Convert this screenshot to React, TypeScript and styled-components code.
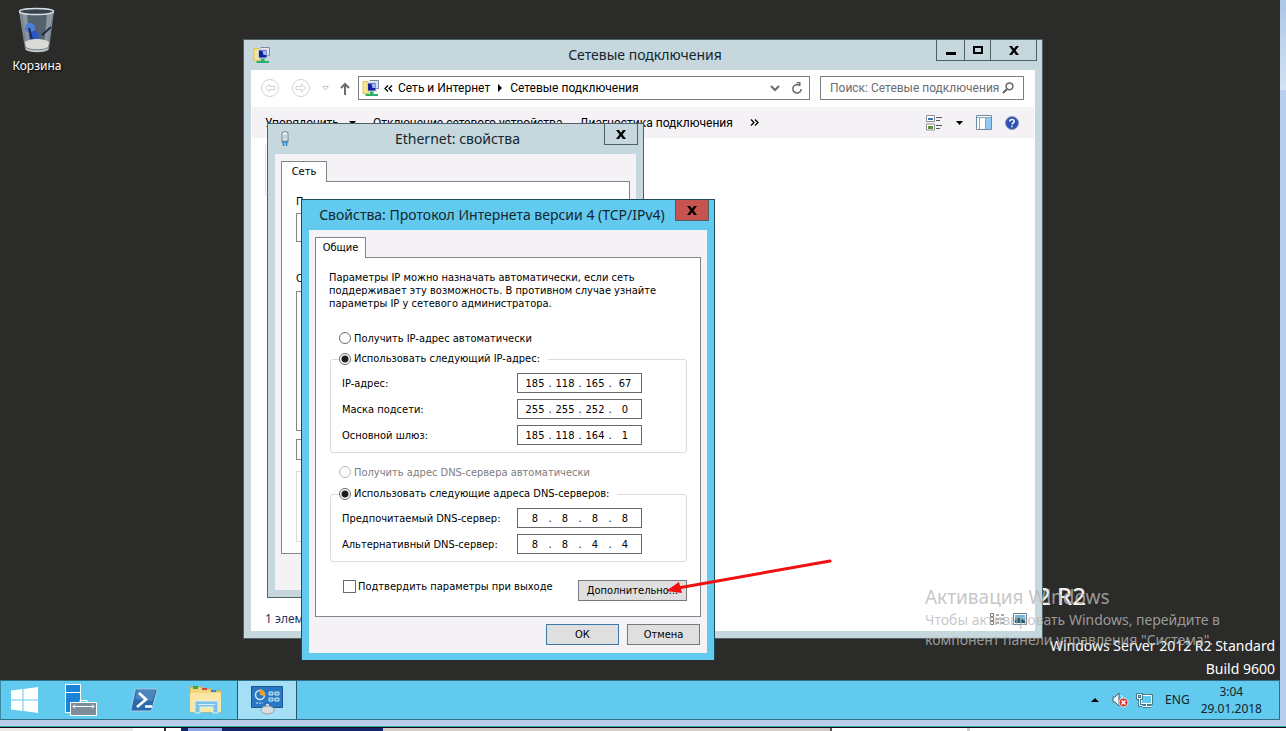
import React from "react";
import styled, { createGlobalStyle, css } from "styled-components";

const ui = '"Noto Sans", "Open Sans", sans-serif';
const narrow = 'Roboto, "Noto Sans", sans-serif';
const dlg = '"DejaVu Sans Condensed", "DejaVu Sans", sans-serif';

const Global = createGlobalStyle`
  *, *::before, *::after { box-sizing: border-box; }
  body { margin: 0; background: #fff; font: 12px/16px ${ui}; color: #000; }
  button, input { font: inherit; color: inherit; margin: 0; padding: 0; border-radius: 0; }
  svg { display: block; flex: none; }
  p { margin: 0; }
`;

const Screen = styled.div`
  height: 100vh;
  display: flex;
  flex-direction: column;
  overflow: hidden;
`;
const Remote = styled.div`
  flex: 1;
  min-height: 0;
  display: flex;
  flex-direction: column;
  background: linear-gradient(#adc6e6, #d3e2f3 90px, #b9cdec 90px);
  border-bottom: 1px solid #3fa9a9;
  padding: 0 6px 6px 0;
`;
const Desktop = styled.main`
  flex: 1;
  position: relative;
  background: #2b2b29;
  overflow: hidden;
`;
const Shortcut = styled.button`
  position: absolute;
  left: 0;
  top: 6px;
  width: 74px;
  display: flex;
  flex-direction: column;
  align-items: center;
  gap: 4px;
  border: 0;
  background: none;
  color: #fff;
  text-shadow: 1px 1px 2px #000;
`;

/* windows */
const frames = {
  idle: { frame: "#c6d7de", edge: "#4f6066" },
  active: { frame: "#62caee", edge: "#1d4a5a" },
};
const Window = styled.section<{ $tone: "idle" | "active"; $x: number; $y: number; $w: number; $h: number }>`
  position: absolute;
  left: ${(p) => p.$x}px;
  top: ${(p) => p.$y}px;
  width: ${(p) => p.$w}px;
  height: ${(p) => p.$h}px;
  display: flex;
  flex-direction: column;
  padding: 0 7px 7px;
  background: ${(p) => frames[p.$tone].frame};
  border: 1px solid ${(p) => frames[p.$tone].edge};
  ${(p) => p.$tone === "active" && css`border-bottom: 0;`}
`;
const TitleBar = styled.header<{ $fill?: boolean }>`
  height: 30px;
  flex: none;
  display: grid;
  grid-template-columns: ${(p) => (p.$fill ? "1fr auto" : "1fr auto 1fr")};
  align-items: center;
  margin-right: -2px;
  padding-left: ${(p) => (p.$fill ? 0 : 2)}px;
`;
const Title = styled.h1`
  margin: 0;
  font-size: 14px;
  line-height: 20px;
  font-weight: 400;
  color: #14262e;
  text-align: center;
  white-space: nowrap;
`;
const Caption = styled.div`
  display: flex;
  justify-content: flex-end;
  align-self: start;
`;
const CaptionButton = styled.button<{ $w: number; $danger?: boolean }>`
  width: ${(p) => p.$w}px;
  height: 21px;
  display: flex;
  align-items: center;
  justify-content: center;
  border: 1px solid #4f6066;
  border-top: 0;
  background: ${(p) => (p.$danger ? "#c75450" : "transparent")};
  & + & { border-left: 0; }
`;
const Client = styled.div<{ $grey?: boolean }>`
  flex: 1;
  min-height: 0;
  display: flex;
  flex-direction: column;
  background: ${(p) => (p.$grey ? "#f5f2f6" : "#fff")};
  border: 1px solid ${(p) => (p.$grey ? "#f5f2f6" : "#fff")};
`;

/* explorer */
const NavRow = styled.nav`
  height: 36px;
  flex: none;
  display: flex;
  align-items: center;
  gap: 10px;
  padding: 0 10px 2px 8px;
  font-family: ${narrow};
`;
const Plain = styled.button`
  display: flex;
  align-items: center;
  border: 0;
  background: none;
  white-space: nowrap;
`;
const History = styled.div`
  display: flex;
  align-items: center;
  gap: 11px;
  flex: none;
  margin-right: -2px;
`;
const Address = styled.div`
  flex: 1;
  height: 24px;
  display: flex;
  align-items: center;
  gap: 5px;
  border: 1px solid #7d7d80;
  padding: 0 6px 0 3px;
`;
const AddressTools = styled.div`
  display: flex;
  align-items: center;
  gap: 11px;
`;
const Spacer = styled.span`
  flex: 1;
`;
const Search = styled.label`
  width: 204px;
  height: 24px;
  display: flex;
  align-items: center;
  border: 1px solid #7d7d80;
  padding: 0 9px;
`;
const SearchInput = styled.input`
  flex: 1;
  min-width: 0;
  border: 0;
  outline: 0;
  background: none;
  &::placeholder { color: #6d6d6d; opacity: 1; }
`;
const Toolbar = styled.div`
  height: 31px;
  flex: none;
  display: flex;
  align-items: center;
  gap: 17px;
  background: #f5f2f6;
  padding: 0 15px 0 13px;
  font-family: ${narrow};
`;
const ToolGroup = styled.div<{ $tight?: boolean }>`
  display: flex;
  align-items: center;
  gap: ${(p) => (p.$tight ? 10 : 13)}px;
`;
const Files = styled.div`
  flex: 1;
  padding: 6px 13px;
`;
const FileTile = styled.div`
  width: 240px;
  height: 52px;
  border: 1px solid #dde3ea;
`;
const StatusBar = styled.footer`
  height: 22px;
  flex: none;
  display: flex;
  align-items: center;
  justify-content: space-between;
  padding: 0 7px 0 13px;
  color: #26335c;
`;
const ViewSwitch = styled.div`
  display: flex;
  gap: 8px;
`;

/* dialogs */
const DialogClient = styled(Client)`
  padding: 6px 5px 7px;
  font: 11px/13px ${dlg};
`;
const Tab = styled.button<{ $w: number }>`
  width: ${(p) => p.$w}px;
  height: 21px;
  flex: none;
  position: relative;
  z-index: 1;
  margin-bottom: -1px;
  padding-bottom: 2px;
  border: 1px solid #84848a;
  border-bottom: 0;
  background: #fff;
`;
const Pane = styled.div`
  flex: 1;
  border: 1px solid #84848a;
  background: #fff;
  padding: 13px 13px 0;
`;
const Stub = styled.div<{ $h: number; $gap: number; $soft?: boolean }>`
  height: ${(p) => p.$h}px;
  margin-top: ${(p) => p.$gap}px;
  border: 1px solid ${(p) => (p.$soft ? "#dcdce0" : "#84848a")};
`;
const EthernetPane = styled(Pane)`
  flex: none;
  height: 373px;
  padding-left: 14px;
`;
const StubLabel = styled.p<{ $gap?: boolean }>`
  margin-top: ${(p) => (p.$gap ? 30 : 0)}px;
`;
const Choice = styled.label<{ $off?: boolean }>`
  display: flex;
  align-items: center;
  gap: 3px;
  color: ${(p) => (p.$off ? "#7c7c80" : "#000")};
`;
const AutoRow = styled.div<{ $gap: number }>`
  margin-top: ${(p) => p.$gap}px;
  padding-left: 10px;
  height: 14px;
  display: flex;
  align-items: center;
`;
const Radio = styled.input`
  appearance: none;
  width: 12px;
  height: 12px;
  border: 1px solid #6b6b6e;
  border-radius: 50%;
  background: #fff;
  &:checked { background: radial-gradient(circle, #1c1c1c 3px, #fff 4px); }
  &:disabled { border-color: #b8b8bc; }
`;
const Group = styled.fieldset<{ $h: number; $gap: number }>`
  height: ${(p) => p.$h}px;
  margin: ${(p) => p.$gap}px 0 0 1px;
  padding: 7px 44px 0 11px;
  border: 1px solid #dcdce0;
  border-radius: 3px;
  display: flex;
  flex-direction: column;
  gap: 6px;
  min-width: 0;
`;
const Legend = styled.legend`
  height: 14px;
  padding: 0 8px 0 0;
  margin-left: -3px;
`;
const FieldRow = styled.div`
  display: flex;
  align-items: center;
  justify-content: space-between;
`;
const IpBox = styled.div`
  width: 125px;
  height: 20px;
  display: flex;
  align-items: center;
  border: 1px solid #68686c;
  padding-left: 4px;
  background: #fff;
`;
const Octet = styled.input`
  width: 26px;
  height: 16px;
  border: 0;
  outline: 0;
  background: none;
  text-align: center;
`;
const Dot = styled.span`
  width: 4px;
  text-align: center;
`;
const Foot = styled.div`
  display: flex;
  justify-content: space-between;
  margin-top: 18px;
  padding-left: 14px;
`;
const Check = styled.input`
  appearance: none;
  width: 13px;
  height: 13px;
  border: 1px solid #6b6b6e;
  background: #fff;
`;
const CheckLabel = styled.label`
  height: 13px;
  display: flex;
  align-items: center;
  gap: 2px;
`;
const PushButton = styled.button<{ $w: number; $default?: boolean }>`
  width: ${(p) => p.$w}px;
  height: 21px;
  border: 1px solid ${(p) => (p.$default ? "#3d77a8" : "#78787c")};
  background: #dfdfdf;
`;
const Actions = styled.div`
  display: flex;
  justify-content: flex-end;
  gap: 8px;
  padding: 7px 1px 0 0;
`;

/* desktop overlays */
const Edition = styled.div`
  position: absolute;
  right: 194px;
  bottom: 66px;
  font-size: 24px;
  line-height: 36px;
  font-weight: 500;
  color: #f2f2f2;
`;
const Build = styled.div`
  position: absolute;
  right: 5px;
  bottom: 0;
  font-size: 14px;
  line-height: 23px;
  color: #fff;
  text-align: right;
`;
const Activation = styled.div`
  position: absolute;
  right: 35px;
  bottom: 30px;
  width: 320px;
  font-size: 14px;
  line-height: 20px;
  color: rgba(184, 184, 184, 0.8);
  pointer-events: none;
`;
const ActivationTitle = styled.p`
  font-size: 19px;
  line-height: 26px;
`;
const Pointer = styled.svg`
  position: absolute;
  left: 664px;
  top: 556px;
`;

/* taskbar */
const Taskbar = styled.footer`
  height: 40px;
  flex: none;
  display: flex;
  background: #62caee;
  border: 1px solid #2c6f8a;
  border-left-color: #3c88a5;
`;
const Task = styled.button<{ $w: number; $on?: boolean }>`
  width: ${(p) => p.$w}px;
  display: flex;
  align-items: center;
  justify-content: center;
  border: 0;
  background: none;
  ${(p) => p.$on && css`background: #a4dff5; border: solid #27566a; border-width: 0 1px;`}
`;
const Tray = styled.div`
  margin-left: auto;
  display: flex;
  align-items: center;
  padding-right: 17px;
  color: #10242c;
`;
const TrayButton = styled(Plain)<{ $gap: number }>`
  margin-right: ${(p) => p.$gap}px;
`;
const Clock = styled.time`
  text-align: center;
  line-height: 17px;
`;

/* strip of the host screen under the remote session */
const Host = styled.div`
  height: 4px;
  flex: none;
  display: flex;
  background: #fff;
  border-top: 1px solid #0a0f14;
`;
const HostPart = styled.span<{ $w: number; $c: string }>`
  width: ${(p) => p.$w}px;
  flex: none;
  background: ${(p) => p.$c};
`;

const NetIcon = () => (
  <svg width="17" height="17" viewBox="0 0 17 17">
    <path d="M1 1.500h5l1 1v11H1z" fill="#f6e58c" stroke="#dcc45c" />
    <path d="M7.500.500h9v8h-3" fill="#e3e7f2" stroke="#7d88a8" />
    <rect x="5.500" y="3" width="8.500" height="8" fill="#12209c" stroke="#c4cbe4" />
    <path d="M9.500 4h4v4h-3z" fill="#9db8f6" />
    <path d="M8 11.500h3.500V14H16v2H3.500v-2H8z" fill="#27b06a" />
  </svg>
);
const PlugIcon = () => (
  <svg width="16" height="16" viewBox="0 0 16 16">
    <path d="M5 1.500q3-2 6 0v8.500H5z" fill="#eef3f6" stroke="#71858f" />
    <path d="M7 3.500v5M9 3.500v5" stroke="#9fb2bc" />
    <path d="M4.500 11h7M6.500 11v4M9.500 11v4" stroke="#2f86c8" strokeWidth="1.600" />
  </svg>
);
const Cross = () => (
  <svg width="10" height="9" viewBox="0 0 10 9">
    <path d="M0 0h3l2 2.700L7 0h3L6.600 4.500 10 9H7L5 6.300 3 9H0l3.400-4.500z" fill="#000" />
  </svg>
);
const Minus = () => <svg width="10" height="9"><path d="M0 6h10v3H0z" /></svg>;
const Square = () => <svg width="10" height="8"><path d="M1 1h8v6H1z" fill="none" stroke="#000" strokeWidth="2" /></svg>;
const Round = ({ back }: { back?: boolean }) => (
  <svg width="20" height="20" viewBox="0 0 20 20" fill="none" stroke="#d2d2d4">
    <circle cx="10" cy="10" r="8.500" />
    <path d={back ? "M15 8.500H9.500V6L5.500 10l4 4v-2.500H15z" : "M5 8.500h5.500V6l4 4-4 4v-2.500H5z"} />
  </svg>
);
const Caret = () => <svg width="7" height="4"><path d="M0 0h7L3.500 4z" /></svg>;
const HistoryCaret = () => <svg width="7" height="5"><path d="M.500.500h6l-3 3.500z" fill="none" stroke="#c8c8cc" /></svg>;
const UpArrow = () => <svg width="10" height="13"><path d="M5 13V2M1 6l4-4 4 4" fill="none" stroke="#6c6c70" strokeWidth="2" /></svg>;
const Chevrons = ({ left }: { left?: boolean }) => (
  <svg width="9" height="7" viewBox="0 0 9 7" fill="none" stroke="#000" strokeWidth="1.300">
    <path d={left ? "M4 .5 1 3.500l3 3M8 .5 5 3.500l3 3" : "M1 .5l3 3-3 3M5 .5l3 3-3 3"} />
  </svg>
);
const DetailsIcon = () => (
  <svg width="17" height="16" viewBox="0 0 17 16">
    <path d="M.5.5h8v6h-8zM.5 9h8v6h-8z" fill="#fff" stroke="#8d8d96" />
    <path d="M2 3h5v2H2z" fill="#3876b8" /><path d="M2 11h5v3H2z" fill="#5f8f3f" />
    <path d="M10 2.500h6M10 5.500h4M10 10.500h6M10 13.500h4" stroke="#56565e" />
  </svg>
);
const PaneIcon = () => (
  <svg width="16" height="15" viewBox="0 0 16 15">
    <path d="M.5.500h15v14H.5z" fill="#fff" stroke="#6f8ba4" />
    <path d="M1 2.500h14M3.500 3v11M9.500 3v11" stroke="#8aa6bc" /><path d="M10 3h5v11h-5z" fill="#8fcaf4" />
  </svg>
);
const HelpIcon = () => (
  <svg width="14" height="14" viewBox="0 0 14 14">
    <circle cx="7" cy="7" r="6.500" fill="#2d50b4" stroke="#8e9ab8" />
    <path d="M4.800 5.500C4.800 2.700 9.300 2.800 9.200 5.400 9.100 6.800 7 6.900 7 8.600M7 9.800v1.500" fill="none" stroke="#fff" strokeWidth="1.500" />
  </svg>
);
const Refresh = () => (
  <svg width="12" height="13" viewBox="0 0 12 13" fill="none" stroke="#707074" strokeWidth="1.600">
    <path d="M8 3.200A4.200 4.200 0 1 0 10.200 7" /><path d="M5.500.5h3.200v3.600" />
  </svg>
);
const Lens = () => (
  <svg width="12" height="12" viewBox="0 0 12 12" fill="none" stroke="#66666a">
    <circle cx="7.500" cy="4.300" r="3.400" strokeWidth="1.500" /><path d="M5 7 1 11" strokeWidth="2.200" />
  </svg>
);
const Bin = () => (
  <svg width="38" height="48" viewBox="0 0 38 48">
    <path d="M1 5h35l-5 38c-3 4-20 4-24 0z" fill="#7c8892" />
    <path d="M4 7h29l-4 33H9z" fill="#54616e" />
    <path d="M4 7h5l3 33H9zM29 7h5l-5 33h-3z" fill="#a4adb4" opacity=".7" />
    <circle cx="12" cy="22" r="5" fill="#4f7ed8" /><circle cx="16" cy="30" r="5" fill="#2a57c4" />
    <path d="M11 22l3 11M33 21l-9 8" stroke="#1d2c48" strokeWidth="2" />
    <path d="M7 36c4-4 20-4 24 0l-1 5c-4 3-18 3-22 0z" fill="#dbdbd6" />
    <path d="M8 43c4 3 18 3 22 0" fill="none" stroke="#c2c8cc" strokeWidth="2" />
    <ellipse cx="18.500" cy="5.500" rx="17" ry="3" fill="#39434d" stroke="#d7dde1" strokeWidth="1.500" />
  </svg>
);
const WinLogo = () => (
  <svg width="28" height="26" viewBox="0 0 28 26" fill="#fff">
    <path d="M0 3.500 11.500 2v10.500H0zM12.500 1.900 27 0v12.500H12.500zM0 13.500h11.500V24L0 22.500zM12.500 13.500H27V26l-14.500-1.900z" />
  </svg>
);
const ServerIcon = () => (
  <svg width="32" height="32" viewBox="0 0 32 32">
    <path d="M.5.500h15v28H.5z" fill="#1c84d8" stroke="#fff" /><path d="M1 8.500h14" stroke="#fff" />
    <path d="M15 19v-2.500h7V19" fill="none" stroke="#fff" />
    <path d="M5.500 18.500h26v13h-26z" fill="#7d8e9a" stroke="#fff" />
    <path d="M8 22.500h21M10 20.500l-2 2 2 2M27 20.500l2 2-2 2" fill="none" stroke="#fff" />
  </svg>
);
const ShellIcon = () => (
  <svg width="28" height="24" viewBox="0 0 28 24">
    <path d="M6 1h20q1.500 0 1 2l-5 18q-.5 2-2 2H2q-2 0-1-2L5 3q.2-2 1-2z" fill="#2a69ab" stroke="#a9cfe8" />
    <path d="M7 2h19l-4 11L5 11z" fill="#5b93c8" opacity=".7" />
    <path d="M9 5l7 6.500L7 19M15 18.500h7" fill="none" stroke="#fff" strokeWidth="2.600" />
  </svg>
);
const FolderIcon = () => (
  <svg width="34" height="30" viewBox="0 0 34 30">
    <path d="M1 2h12l1 2h8l1 2h9v21H1z" fill="#f1d67e" stroke="#d2ad4a" />
    <path d="M4 1h5v3H4z" fill="#37a64a" /><path d="M13 3h5v2h-5z" fill="#cf4a36" /><path d="M22 5h5v2h-5z" fill="#3a86c8" />
    <path d="M1 8h31v19H1z" fill="#f9e7a3" />
    <path d="M6 28V17q0-1 1-1h21q1 0 1 1v11h-5v-6H11v6z" fill="#7cc2e6" stroke="#d8f0fb" />
    <path d="M9 19.500h17" stroke="#d8f0fb" />
  </svg>
);
const PanelIcon = () => (
  <svg width="32" height="30" viewBox="0 0 32 30">
    <path d="M.5 1.500h31v21H.5z" fill="#2a78c4" stroke="#1b5692" />
    <circle cx="9" cy="10" r="4.500" fill="none" stroke="#cfe6f6" strokeWidth="1.500" /><path d="M9 10V4a6 6 0 0 1 5 7z" fill="#f2a13a" />
    <path d="M18 7h4v3h-4zM24 7h4v3h-4zM18 13h4v3h-4zM24 13h4v3h-4z" fill="#4f9ad8" stroke="#cfe6f6" />
    <path d="M5 18h7" stroke="#cfe6f6" strokeDasharray="2 1" />
    <path d="M15 19h3v4h-3z" fill="#d3d8dc" /><ellipse cx="16.500" cy="25" rx="6.500" ry="4" fill="#d9dde0" stroke="#98a2aa" />
  </svg>
);
const SoundIcon = () => (
  <svg width="17" height="16" viewBox="0 0 17 16">
    <path d="M1 5h2l4-4v13l-4-4H1z" fill="#eef6fa" stroke="#45616e" /><path d="M9 3q3 3 0 9" fill="none" stroke="#fff" />
    <circle cx="11.500" cy="10.500" r="4.500" fill="#d8342c" stroke="#f2dede" />
    <path d="M9.500 8.500l4 4M13.500 8.500l-4 4" stroke="#fff" strokeWidth="1.500" />
  </svg>
);
const LanIcon = () => (
  <svg width="17" height="15" viewBox="0 0 17 15">
    <g fill="none" stroke="#3d6474" strokeWidth="2.600">
      <path d="M5.500 2.500h10v8h-10zM10.500 11v3M7 13.500h8" />
    </g>
    <path d="M5.500 2.500h10v8h-10z" fill="#62caee" stroke="#fff" /><path d="M10.500 11v3M7 13.500h8" stroke="#fff" />
    <path d="M1.500 1.500h4v4h-4zM3.500 6v6.500H6" fill="#62caee" stroke="#3d6474" strokeWidth="2.600" />
    <path d="M1.500 1.500h4v4h-4zM3.500 6v6.500H6" fill="none" stroke="#fff" />
  </svg>
);
const PictureIcon = () => (
  <svg width="14" height="12" viewBox="0 0 14 12">
    <path d="M.5.500h13v11H.5z" fill="#fff" stroke="#6d7c88" /><path d="M2 2h10v8H2z" fill="#6fb4da" /><path d="M2 5q5-1 10 3v2H2z" fill="#24566e" />
  </svg>
);
const ListIcon = () => (
  <svg width="15" height="12" viewBox="0 0 15 12">
    <path d="M.5.500h3v3h-3zM.5 4.500h3v3h-3zM.5 8.500h3v3h-3z" fill="none" stroke="#7a7a84" />
    <path d="M6 2h3M11 2h3M6 6h3M11 6h3M6 10h3M11 10h3" stroke="#56565e" />
  </svg>
);

function IpField({ label, value }: { label: string; value: string[] }) {
  return (
    <FieldRow>
      <span>{label}</span>
      <IpBox role="group" aria-label={label}>
        {value.map((v, i) => (
          <React.Fragment key={i}>
            {i > 0 && <Dot>.</Dot>}
            <Octet defaultValue={v} aria-label={`${label} ${i + 1}`} />
          </React.Fragment>
        ))}
      </IpBox>
    </FieldRow>
  );
}

const Connections = () => (
  <Window $tone="idle" $x={243} $y={39} $w={800} $h={600}>
    <TitleBar>
      <NetIcon />
      <Title>Сетевые подключения</Title>
      <Caption>
        <CaptionButton $w={29} aria-label="Свернуть"><Minus /></CaptionButton>
        <CaptionButton $w={26} aria-label="Развернуть"><Square /></CaptionButton>
        <CaptionButton $w={46} aria-label="Закрыть"><Cross /></CaptionButton>
      </Caption>
    </TitleBar>
    <Client>
      <NavRow>
        <History>
          <Plain aria-label="Назад"><Round back /></Plain>
          <Plain aria-label="Вперёд"><Round /></Plain>
          <Plain aria-label="Журнал"><HistoryCaret /></Plain>
          <Plain aria-label="Вверх"><UpArrow /></Plain>
        </History>
        <Address>
          <NetIcon />
          <Chevrons left />
          <Plain>Сеть и Интернет</Plain>
          <svg width="10" height="8"><path d="M3 0l4 4-4 4z" /></svg>
          <Plain>Сетевые подключения</Plain>
          <Spacer />
          <AddressTools>
            <Plain aria-label="Список"><svg width="10" height="7"><path d="M1 1l4 4 4-4" fill="none" stroke="#6c6c70" strokeWidth="2" /></svg></Plain>
            <Plain aria-label="Обновить"><Refresh /></Plain>
          </AddressTools>
        </Address>
        <Search>
          <SearchInput placeholder="Поиск: Сетевые подключения" aria-label="Поиск" />
          <Lens />
        </Search>
      </NavRow>
      <Toolbar>
        <Plain><ToolGroup $tight><span>Упорядочить</span><Caret /></ToolGroup></Plain>
        <Plain>Отключение сетевого устройства</Plain>
        <Plain>Диагностика подключения</Plain>
        <Plain aria-label="Ещё"><Chevrons /></Plain>
        <Spacer />
        <ToolGroup>
          <Plain aria-label="Вид"><DetailsIcon /></Plain>
          <Plain aria-label="Выбор вида"><Caret /></Plain>
          <Plain aria-label="Область просмотра"><PaneIcon /></Plain>
          <Plain aria-label="Справка"><HelpIcon /></Plain>
        </ToolGroup>
      </Toolbar>
      <Files><FileTile /></Files>
      <StatusBar>
        <span>1 элемент</span>
        <ViewSwitch>
          <Plain aria-label="Таблица"><ListIcon /></Plain>
          <Plain aria-label="Эскизы"><PictureIcon /></Plain>
        </ViewSwitch>
      </StatusBar>
    </Client>
  </Window>
);

const Ethernet = () => (
  <Window $tone="idle" $x={267} $y={123} $w={377} $h={475}>
    <TitleBar>
      <PlugIcon />
      <Title>Ethernet: свойства</Title>
      <Caption><CaptionButton $w={34} aria-label="Закрыть"><Cross /></CaptionButton></Caption>
    </TitleBar>
    <DialogClient $grey>
      <Tab $w={46}>Сеть</Tab>
      <EthernetPane>
        <StubLabel>П</StubLabel>
        <Stub $h={29} $gap={5} />
        <StubLabel $gap>О</StubLabel>
        <Stub $h={140} $gap={6} />
        <Stub $h={21} $gap={8} />
        <Stub $h={71} $gap={11} $soft />
      </EthernetPane>
    </DialogClient>
  </Window>
);

const Protocol = () => (
  <Window $tone="active" $x={301} $y={199} $w={414} $h={461}>
    <TitleBar $fill>
      <Title>Свойства: Протокол Интернета версии 4 (TCP/IPv4)</Title>
      <Caption><CaptionButton $w={34} $danger aria-label="Закрыть"><Cross /></CaptionButton></Caption>
    </TitleBar>
    <DialogClient $grey>
      <Tab $w={51}>Общие</Tab>
      <Pane>
        <p>
          Параметры IP можно назначать автоматически, если сеть<br />
          поддерживает эту возможность. В противном случае узнайте<br />
          параметры IP у сетевого администратора.
        </p>
        <AutoRow $gap={21}>
          <Choice><Radio type="radio" name="ip" />Получить IP-адрес автоматически</Choice>
        </AutoRow>
        <Group $h={101} $gap={7}>
          <Legend><Choice><Radio type="radio" name="ip" defaultChecked />Использовать следующий IP-адрес:</Choice></Legend>
          <IpField label="IP-адрес:" value={["185", "118", "165", "67"]} />
          <IpField label="Маска подсети:" value={["255", "255", "252", "0"]} />
          <IpField label="Основной шлюз:" value={["185", "118", "164", "1"]} />
        </Group>
        <AutoRow $gap={12}>
          <Choice $off><Radio type="radio" name="dns" disabled />Получить адрес DNS-сервера автоматически</Choice>
        </AutoRow>
        <Group $h={75} $gap={8}>
          <Legend><Choice><Radio type="radio" name="dns" defaultChecked />Использовать следующие адреса DNS-серверов:</Choice></Legend>
          <IpField label="Предпочитаемый DNS-сервер:" value={["8", "8", "8", "8"]} />
          <IpField label="Альтернативный DNS-сервер:" value={["8", "8", "4", "4"]} />
        </Group>
        <Foot>
          <CheckLabel><Check type="checkbox" />Подтвердить параметры при выходе</CheckLabel>
          <PushButton $w={109}>Дополнительно...</PushButton>
        </Foot>
      </Pane>
      <Actions>
        <PushButton $w={73} $default>ОК</PushButton>
        <PushButton $w={73}>Отмена</PushButton>
      </Actions>
    </DialogClient>
  </Window>
);

export default function App() {
  return (
    <Screen>
      <Global />
      <Remote>
        <Desktop>
          <Shortcut><Bin />Корзина</Shortcut>
          <Edition>2 R2</Edition>
          <Build>Windows Server 2012 R2 Standard<br />Build 9600</Build>
          <Connections />
          <Ethernet />
          <Protocol />
          <Activation>
            <ActivationTitle>Активация Windows</ActivationTitle>
            <p>Чтобы активировать Windows, перейдите в<br />компонент панели управления "Система".</p>
          </Activation>
          <Pointer width="168" height="40" viewBox="0 0 168 40">
            <path d="M166 5 14 32" stroke="#f01010" strokeWidth="3" strokeLinecap="round" />
            <path d="M2 35 15 26l3 11z" fill="#f01010" />
          </Pointer>
        </Desktop>
        <Taskbar>
          <Task $w={48} aria-label="Пуск"><WinLogo /></Task>
          <Task $w={64} aria-label="Диспетчер серверов"><ServerIcon /></Task>
          <Task $w={62} aria-label="PowerShell"><ShellIcon /></Task>
          <Task $w={62} aria-label="Проводник"><FolderIcon /></Task>
          <Task $w={60} $on aria-label="Панель управления"><PanelIcon /></Task>
          <Tray>
            <TrayButton $gap={13} aria-label="Скрытые значки"><svg width="8" height="4"><path d="M0 4h8L4 0z" /></svg></TrayButton>
            <TrayButton $gap={7} aria-label="Звук"><SoundIcon /></TrayButton>
            <TrayButton $gap={12} aria-label="Сеть"><LanIcon /></TrayButton>
            <TrayButton $gap={11}>ENG</TrayButton>
            <Clock>3:04<br />29.01.2018</Clock>
          </Tray>
        </Taskbar>
      </Remote>
      <Host>
        <HostPart $w={133} $c="#ecebea" />
        <HostPart $w={31} $c="#fff" />
        <HostPart $w={2} $c="#333" />
        <HostPart $w={15} $c="#fff" />
        <HostPart $w={7} $c="#14246a" />
        <HostPart $w={34} $c="#8fa6e4" />
        <HostPart $w={161} $c="#14246a" />
        <HostPart $w={447} $c="#d3ccc8" />
        <HostPart $w={2} $c="#555" />
        <HostPart $w={135} $c="#fff" />
        <HostPart $w={3} $c="#cfcfcf" />
      </Host>
    </Screen>
  );
}
